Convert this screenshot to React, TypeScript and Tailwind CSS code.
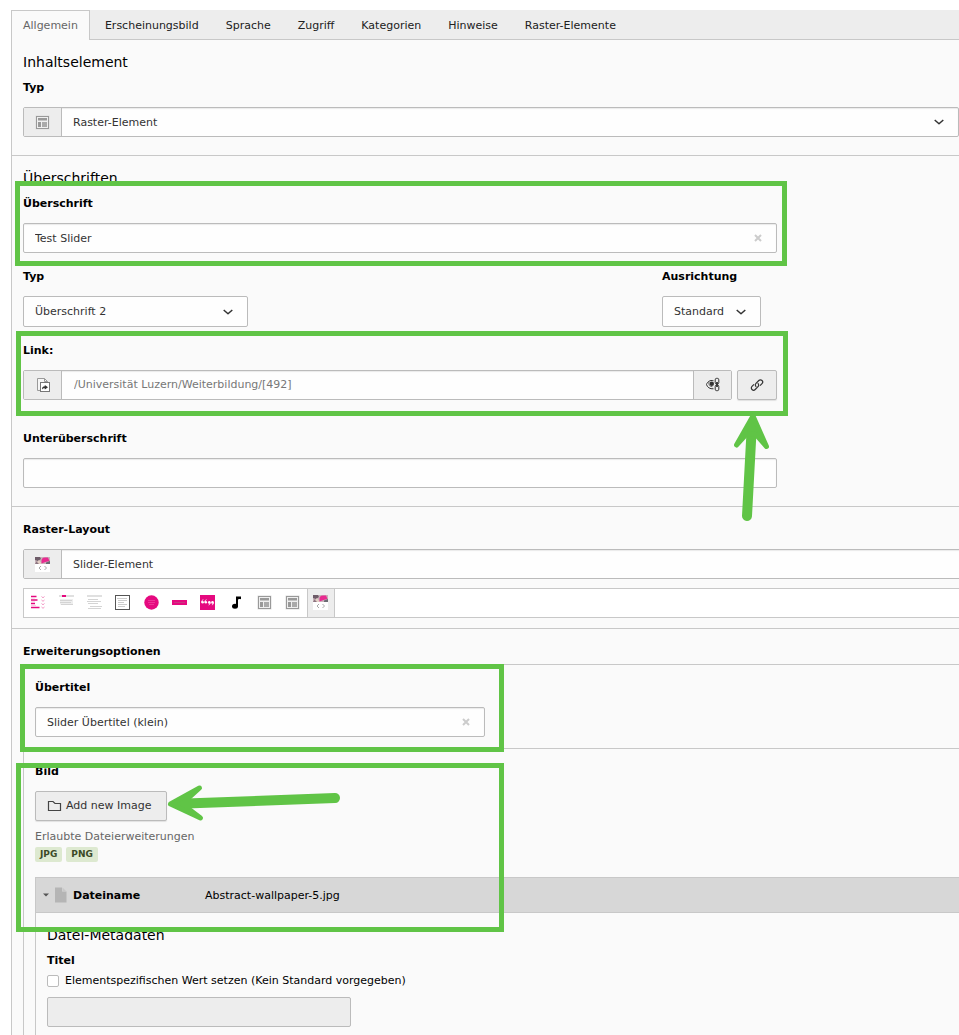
import { useState } from "react";

const tabs = [
  "Allgemein",
  "Erscheinungsbild",
  "Sprache",
  "Zugriff",
  "Kategorien",
  "Hinweise",
  "Raster-Elemente",
];

const labelClass = "block text-[11px] leading-4 font-bold text-black";
const boxClass =
  "flex h-[30px] rounded-[2px] border border-[#bbb] bg-[#fefefe] shadow-[inset_0_1px_1px_rgba(0,0,0,0.08)]";
const addonClass =
  "flex w-[38px] shrink-0 items-center justify-center bg-[#ededed]";
const inputClass = "min-w-0 flex-1 pt-[2px] pl-[11px] text-[#333] outline-none";

const GridIcon = () => (
  <svg width="15" height="15" viewBox="0 0 15 15">
    <rect x="0.5" y="0.5" width="14" height="14" fill="#ddd" />
    <rect x="1.5" y="1.5" width="12" height="12" fill="#efefef" stroke="#999" />
    <rect x="3" y="3" width="9" height="2.5" fill="#999" />
    <rect x="3" y="7" width="3" height="5" fill="#999" />
    <rect x="7" y="7" width="5" height="5" fill="#aaa" />
  </svg>
);

const SliderIcon = () => (
  <svg width="15" height="15" viewBox="0 0 15 15">
    <rect width="15" height="15" fill="#fff" />
    <rect width="15" height="7" fill="#c9b4ba" />
    <path d="M0 0h5l1 2-3 2-3-1z" fill="#6e5c69" />
    <path d="M0 7l2-3 3 3z" fill="#8a7480" />
    <path d="M2 5l2-2 3 4H4z" fill="#e5d0c6" />
    <path d="M6.500 4c0-3 2-3.500 4-3.500h2.500l1.500 3.500-4 1-4 1.500z" fill="#e82a90" />
    <path d="M11 5.500l4-1.500v3h-4z" fill="#6c6c74" />
    <path d="M6 9L4 11l2 2M9.500 9l2 2-2 2" fill="none" stroke="#aaa" />
  </svg>
);

const ListIcon = () => (
  <svg width="15" height="15" viewBox="0 0 15 15">
    <path
      d="M0 1.500h5.500M0 5h6.500M0 8.500h4M0 12.500h8.500"
      stroke="#e5097f"
      strokeWidth="1.300"
    />
    <path d="M0 3h4M0 6.800h4M0 10.500h5" stroke="#f6c3dc" strokeWidth="0.800" />
    <path
      d="M10.500 1.500l1.500 1.300 1.500-1.300M10.500 5l1.500 1.300L13.500 5M10.500 8.500l1.500 1.300 1.500-1.300M10.500 12l1.500 1.300 1.500-1.300"
      fill="none"
      stroke="#f08bbd"
      strokeWidth="0.900"
    />
  </svg>
);

const TeaserIcon = () => (
  <svg width="15" height="15" viewBox="0 0 15 15">
    <rect width="15" height="2" fill="#e0e0e0" />
    <rect x="3" width="4" height="2" fill="#e5097f" />
    <rect x="1" y="4" width="13" height="5.500" fill="#eee" />
    <path d="M1 5.500h12M1 7.500h11M2 9.500h12" stroke="#d4d4d4" />
  </svg>
);

const TextIcon = () => (
  <svg width="15" height="15" viewBox="0 0 15 15">
    <rect width="15" height="2" fill="#e0e0e0" />
    <path d="M1 4.500h10M0 6.500h14M1 8.500h10M3 11.500h12M1 13.500h13" stroke="#d4d4d4" />
  </svg>
);

const BoxIcon = () => (
  <svg width="15" height="15" viewBox="0 0 15 15">
    <rect x="0.500" y="0.500" width="14" height="14" fill="#fff" stroke="#555" />
    <path d="M2 3.500h10M3 5.500h9M3 7.500h6M3 9.500h9M3 11.500h7" stroke="#ccc" />
  </svg>
);

const CircleIcon = () => (
  <svg width="15" height="15" viewBox="0 0 15 15">
    <circle cx="7.500" cy="7.500" r="7.200" fill="#e5097f" />
    <path d="M4 5.500h7M4 7.500h7M5 9.500h5" stroke="#f03f9c" strokeWidth="0.800" />
  </svg>
);

const ButtonIcon = () => (
  <svg width="15" height="15" viewBox="0 0 15 15">
    <rect y="5" width="15" height="5" fill="#e5097f" />
    <path d="M2 7.500h11" stroke="#c83a80" />
  </svg>
);

const QuoteIcon = () => (
  <svg width="15" height="15" viewBox="0 0 15 15">
    <rect width="15" height="15" fill="#e5097f" />
    <g fill="#fff">
      <circle cx="2.600" cy="7.200" r="1.300" />
      <circle cx="5.800" cy="7.200" r="1.300" />
      <circle cx="9.300" cy="7.400" r="1.300" />
      <circle cx="12.500" cy="7.400" r="1.300" />
    </g>
    <path
      d="M1.700 7C1.700 5.800 2.300 5 3.300 4.700M4.900 7c0-1.200.6-2 1.600-2.300M10.200 7.500c0 1.300-.5 2.200-1.500 2.500M13.400 7.500c0 1.300-.5 2.200-1.500 2.500"
      fill="none"
      stroke="#fff"
      strokeWidth="0.900"
    />
  </svg>
);

const NoteIcon = () => (
  <svg width="15" height="15" viewBox="0 0 15 15">
    <ellipse cx="6" cy="11.200" rx="3" ry="2.500" fill="#000" />
    <path d="M7 11.500V1.500h5v2.800c-1.500-.8-3-.4-3 .7v6.500z" fill="#000" />
  </svg>
);

const PageIcon = () => (
  <svg width="16" height="16" viewBox="0 0 16 16">
    <path d="M2.500 13.500V1.500h7l3 3v1" fill="#f5f5f5" stroke="#999" />
    <path d="M2.500 13.500h3" stroke="#999" />
    <path d="M9.500 1.500v3h3" fill="none" stroke="#999" />
    <rect x="5.500" y="5.500" width="9" height="9" fill="#fff" stroke="#777" />
    <path
      d="M7 12.500c0-2.300 1-3.300 2.800-3.300V8l3.200 2.300-3.200 2.300V11.200c-1.300 0-2.200.4-2.800 1.300z"
      fill="#333"
    />
  </svg>
);

const EyeLinkIcon = () => (
  <svg width="16" height="16" viewBox="0 0 16 16" fill="none" stroke="#333">
    <path d="M8.500 3.700C5 2.700 2.200 5 1.500 7.500c.6 2.700 3.500 4.700 7 4.300" />
    <path d="M4 5C3.300 7.500 4.500 9.500 7.500 9.800" strokeWidth="0.700" />
    <circle cx="6.800" cy="6.800" r="2.200" fill="#333" stroke="none" />
    <rect x="10.200" y="1.300" width="3.600" height="5.700" rx="1.500" />
    <rect x="10.200" y="8" width="3.600" height="5.700" rx="1.500" />
    <path d="M12 5v5" strokeWidth="1.800" />
  </svg>
);

const ChainIcon = () => (
  <svg width="16" height="16" viewBox="0 0 16 16" fill="none" stroke="#333" strokeWidth="1.200">
    <path d="M7.300 9.700c-1.200-1-1.300-2.400-.3-3.400l2.800-2.800c.9-.9 2.300-.9 3.200 0s.9 2.200 0 3.100L11 8.600" />
    <path d="M8.700 6.300c1.200 1 1.300 2.400.3 3.400l-2.800 2.800c-.9.900-2.300.9-3.200 0s-.9-2.200 0-3.100L5 7.400" />
  </svg>
);

const FolderIcon = () => (
  <svg width="16" height="16" viewBox="0 0 16 16" fill="none" stroke="#444">
    <path d="M1.500 12.500v-9h4.500l2 2h5.500v7z" strokeWidth="1.200" />
  </svg>
);

const Chevron = () => (
  <svg
    className="pointer-events-none absolute top-1/2 right-[13px] -translate-y-1/2"
    width="12"
    height="8"
    viewBox="0 0 12 8"
  >
    <path
      d="M1.700 2L6 5.800 10.300 2"
      fill="none"
      stroke="#333"
      strokeWidth="1.500"
      strokeLinejoin="round"
    />
  </svg>
);

const Clear = ({ onClick }) => (
  <button
    type="button"
    aria-label="Leeren"
    onClick={onClick}
    className="flex w-[37px] items-center justify-center"
  >
    <svg width="8" height="8" viewBox="0 0 8 8">
      <path d="M1 1l6 6M7 1L1 7" stroke="#ccc" strokeWidth="2" />
    </svg>
  </button>
);

const SelectBox = ({ id, options }) => (
  <div className="relative flex min-w-0 flex-1">
    <select
      id={id}
      className="w-full appearance-none bg-transparent pt-px pr-8 pl-[11px] text-[#333] outline-none"
    >
      {options.map((option) => (
        <option key={option}>{option}</option>
      ))}
    </select>
    <Chevron />
  </div>
);

const layouts = [
  { name: "Liste", icon: <ListIcon /> },
  { name: "Teaser", icon: <TeaserIcon /> },
  { name: "Text", icon: <TextIcon /> },
  { name: "Box", icon: <BoxIcon /> },
  { name: "Kreis", icon: <CircleIcon /> },
  { name: "Button", icon: <ButtonIcon /> },
  { name: "Zitat", icon: <QuoteIcon /> },
  { name: "Audio", icon: <NoteIcon /> },
  { name: "Raster 1", icon: <GridIcon /> },
  { name: "Raster 2", icon: <GridIcon /> },
  { name: "Slider-Element", icon: <SliderIcon /> },
];

// Green frames and arrows that point out the relevant fields
const Annotations = () => (
  <div className="pointer-events-none absolute inset-0">
    <div className="absolute top-[181px] left-[15px] h-[85px] w-[772px] border-5 border-[#60c446]" />
    <div className="absolute top-[331px] left-[16px] h-[85px] w-[772px] border-5 border-[#60c446]" />
    <div className="absolute top-[664px] left-[20px] h-[88px] w-[484px] border-5 border-[#60c446]" />
    <div className="absolute top-[763px] left-[16px] h-[169px] w-[488px] border-5 border-[#60c446]" />
    <svg
      className="absolute top-[410px] left-[730px]"
      width="42"
      height="114"
      viewBox="730 410 42 114"
      fill="#60c446"
      stroke="#60c446"
      strokeLinecap="round"
      strokeLinejoin="round"
    >
      <path d="M751.500 432L747 516" strokeWidth="10" />
      <path d="M753 416L766.500 446.500L756 434.500L747 433.500L736.500 445Z" strokeWidth="5" />
    </svg>
    <svg
      className="absolute top-[782px] left-[165px]"
      width="178"
      height="42"
      viewBox="165 782 178 42"
      fill="#60c446"
      stroke="#60c446"
      strokeLinecap="round"
      strokeLinejoin="round"
    >
      <path d="M186 803.500L335 798" strokeWidth="10" />
      <path d="M170.500 804L199.500 788L188 798.500L188 808.500L200.500 818Z" strokeWidth="5" />
    </svg>
  </div>
);

const App = () => {
  const [activeTab, setActiveTab] = useState("Allgemein");
  const [layout, setLayout] = useState("Slider-Element");
  const [formData, setFormData] = useState({
    header: "Test Slider",
    link: "/Universität Luzern/Weiterbildung/[492]",
    subheader: "",
    overtitle: "Slider Übertitel (klein)",
  });

  const handleChange = (e) => {
    setFormData({ ...formData, [e.target.name]: e.target.value });
  };

  return (
    <div className="relative overflow-hidden bg-white pt-[10px] pl-[11px] font-['DejaVu_Sans',Verdana,sans-serif] text-[11px] leading-4 text-black">
      <div className="flex h-[30px] gap-[3px] border-b border-[#c8c8c8] bg-[#ededed]">
        {tabs.map((tab) => (
          <button
            key={tab}
            type="button"
            onClick={() => setActiveTab(tab)}
            className={
              tab === activeTab
                ? "-mb-px border border-b-0 border-[#c8c8c8] bg-[#fafafa] px-[11px] text-[#666]"
                : "-mb-px border border-transparent px-[11px] pt-px text-[#212121]"
            }
          >
            {tab}
          </button>
        ))}
      </div>

      <form className="border-l border-[#c8c8c8] bg-[#fafafa]">
        <section className="pt-3 pb-[18px] pl-[11px]">
          <h2 className="mb-2 text-[14px] leading-5">Inhaltselement</h2>
          <label htmlFor="type" className={labelClass}>
            Typ
          </label>
          <div className={`mt-[11px] ${boxClass}`}>
            <span className={`border-r border-[#bbb] ${addonClass}`}>
              <GridIcon />
            </span>
            <SelectBox id="type" options={["Raster-Element"]} />
          </div>
        </section>

        <section className="border-t border-[#c8c8c8] pt-3 pb-[18px] pl-[11px]">
          <h2 className="mb-2 text-[14px] leading-5">Überschriften</h2>
          <div className="max-w-[754px]">
            <label htmlFor="header" className={labelClass}>
              Überschrift
            </label>
            <div className={`mt-[11px] ${boxClass}`}>
              <input
                id="header"
                name="header"
                type="text"
                value={formData.header}
                onChange={handleChange}
                className={inputClass}
              />
              <Clear onClick={() => setFormData({ ...formData, header: "" })} />
            </div>

            <div className="mt-4 flex">
              <div className="flex-1">
                <label htmlFor="headerType" className={labelClass}>
                  Typ
                </label>
                <div className="mt-[11px] flex h-[31px] w-[225px] rounded-[2px] border border-[#bbb] bg-[#fefefe]">
                  <SelectBox id="headerType" options={["Überschrift 2"]} />
                </div>
              </div>
              <div className="w-[115px]">
                <label htmlFor="align" className={labelClass}>
                  Ausrichtung
                </label>
                <div className="mt-[11px] flex h-[31px] w-[99px] rounded-[2px] border border-[#bbb] bg-[#fefefe]">
                  <SelectBox id="align" options={["Standard"]} />
                </div>
              </div>
            </div>

            <label htmlFor="link" className={`mt-4 ${labelClass}`}>
              Link:
            </label>
            <div className="mt-[11px] flex gap-[5px]">
              <div className={`flex-1 ${boxClass}`}>
                <span className={`border-r border-[#bbb] ${addonClass}`}>
                  <PageIcon />
                </span>
                <input
                  id="link"
                  name="link"
                  type="text"
                  value={formData.link}
                  onChange={handleChange}
                  className="min-w-0 flex-1 pl-3 text-[#777] outline-none"
                />
                <button
                  type="button"
                  aria-label="Link-Ziel anzeigen"
                  className={`border-l border-[#bbb] ${addonClass}`}
                >
                  <EyeLinkIcon />
                </button>
              </div>
              <button
                type="button"
                aria-label="Link-Browser öffnen"
                className="flex h-[30px] w-10 items-center justify-center rounded-[2px] border border-[#bbb] bg-[#ededed] shadow-[0_1px_1px_rgba(0,0,0,0.1)]"
              >
                <ChainIcon />
              </button>
            </div>

            <label htmlFor="subheader" className={`mt-[31px] ${labelClass}`}>
              Unterüberschrift
            </label>
            <div className={`mt-[11px] ${boxClass}`}>
              <input
                id="subheader"
                name="subheader"
                type="text"
                value={formData.subheader}
                onChange={handleChange}
                className={inputClass}
              />
            </div>
          </div>
        </section>

        <section className="border-t border-[#c8c8c8] pt-[15px] pb-[10px] pl-[11px]">
          <label htmlFor="layout" className={labelClass}>
            Raster-Layout
          </label>
          <div className="-mr-10">
            <div className={`mt-[11px] ${boxClass}`}>
              <span className={`border-r border-[#bbb] ${addonClass}`}>
                <SliderIcon />
              </span>
              <SelectBox id="layout" options={["Slider-Element"]} />
            </div>
            <div className="mt-[9px] flex h-[30px] border border-[#c8c8c8] bg-white">
              <div className="grid w-[311px] grid-cols-11">
                {layouts.map(({ name, icon }) => (
                  <button
                    key={name}
                    type="button"
                    aria-label={name}
                    onClick={() => setLayout(name)}
                    className={
                      name === layout
                        ? "flex items-center justify-center border-x border-[#c8c8c8] bg-[#ededed] pb-[2px]"
                        : "flex items-center justify-center pb-[2px]"
                    }
                  >
                    {icon}
                  </button>
                ))}
              </div>
            </div>
          </div>
        </section>

        <section className="border-t border-[#c8c8c8] pt-[15px] pl-[11px]">
          <h3 className={labelClass}>Erweiterungsoptionen</h3>
          <div className="mt-1 border-l border-[#c8c8c8]">
            <div className="border-t border-[#c8c8c8] pt-[15px] pb-[11px] pl-[11px]">
              <label htmlFor="overtitle" className={labelClass}>
                Übertitel
              </label>
              <div className={`mt-[11px] max-w-[450px] ${boxClass}`}>
                <input
                  id="overtitle"
                  name="overtitle"
                  type="text"
                  value={formData.overtitle}
                  onChange={handleChange}
                  className={inputClass}
                />
                <Clear
                  onClick={() => setFormData({ ...formData, overtitle: "" })}
                />
              </div>
            </div>

            <div className="border-t border-[#c8c8c8] pt-[15px] pl-[11px]">
              <h4 className={labelClass}>Bild</h4>
              <button
                type="button"
                className="mt-[11px] flex h-[30px] w-[132px] items-center gap-[3px] rounded-[2px] border border-[#bbb] bg-[#ededed] pl-[11px] text-[#333] shadow-[0_1px_1px_rgba(0,0,0,0.1)]"
              >
                <FolderIcon />
                Add new Image
              </button>
              <p className="mt-2 text-[#666]">Erlaubte Dateierweiterungen</p>
              <div className="mt-[2px] flex gap-1 text-[9px] leading-[15px] font-bold text-[#3c4a27]">
                <span className="rounded-[2px] bg-[#dde9d0] px-[5px]">JPG</span>
                <span className="rounded-[2px] bg-[#dde9d0] px-[5px]">PNG</span>
              </div>

              <div className="mt-[15px] border-l border-[#c8c8c8]">
                <button
                  type="button"
                  className="flex h-9 w-full items-center border-y border-[#c8c8c8] bg-[#d7d7d7] pl-[7px] text-left"
                >
                  <svg width="6" height="4" viewBox="0 0 6 4">
                    <path d="M0 0.500h6L3 3.500z" fill="#555" />
                  </svg>
                  <svg
                    className="ml-[6px]"
                    width="12"
                    height="16"
                    viewBox="0 0 12 16"
                  >
                    <path d="M0 0.500h7v4h4.500v11H0z" fill="#b5b5b5" />
                    <path d="M7.500 0.500l4 4h-4z" fill="#c8c8c8" />
                  </svg>
                  <span className="ml-[6px] w-[132px] pt-[2px] font-bold">
                    Dateiname
                  </span>
                  <span className="pt-[2px]">Abstract-wallpaper-5.jpg</span>
                </button>

                <div className="pt-3 pb-2 pl-[11px]">
                  <h2 className="mb-2 text-[14px] leading-5">
                    Datei-Metadaten
                  </h2>
                  <label htmlFor="fileTitle" className={labelClass}>
                    Titel
                  </label>
                  <label className="mt-1 flex items-center gap-[6px]">
                    <input
                      type="checkbox"
                      className="h-3 w-3 appearance-none rounded-[2px] border border-[#bbb] bg-white checked:bg-[#666]"
                    />
                    Elementspezifischen Wert setzen (Kein Standard vorgegeben)
                  </label>
                  <input
                    id="fileTitle"
                    type="text"
                    disabled
                    className="mt-2 block h-[30px] w-[304px] rounded-[2px] border border-[#bbb] bg-[#ededed] px-[11px]"
                  />
                </div>
              </div>
            </div>
          </div>
        </section>
      </form>

      <Annotations />
    </div>
  );
};

export default App;
